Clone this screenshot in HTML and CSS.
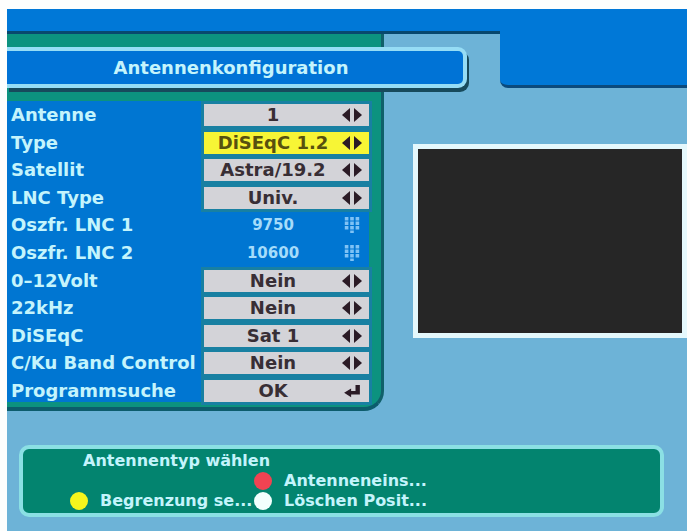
FILE: index.html
```html
<!DOCTYPE html>
<html lang="de">
<head>
    <meta charset="UTF-8">
    <meta name="viewport" content="width=device-width, initial-scale=1.0">
    <title>Antennenkonfiguration</title>
    <link rel="stylesheet" href="styles.css">
</head>
<body>
    <!-- Shared icons -->
    <svg class="sprite" aria-hidden="true">
        <symbol id="arrows" viewBox="0 0 20 14">
            <path d="M8 0v14L0 7z"/>
            <path d="M12 0v14l8-7z"/>
        </symbol>
        <symbol id="keypad" viewBox="0 0 20 20">
            <path d="M2 1h4v4H2zM8 1h4v4H8zM14 1h4v4h-4zM2 6h4v4H2zM8 6h4v4H8zM14 6h4v4h-4zM2 11h4v4H2zM8 11h4v4H8zM14 11h4v4h-4zM8 16h4v3H8z"/>
        </symbol>
        <symbol id="enter" viewBox="0 0 20 16">
            <path d="M14 1h5v11H9v3L1 10l8-5v3h5z"/>
        </symbol>
    </svg>

    <main class="screen">
        <div class="topbar"></div>
        <div class="corner"></div>
        <h1 class="title">Antennenkonfiguration</h1>

        <section class="panel">
            <form class="settings">
                <div class="row">
                    <label for="antenne">Antenne</label>
                    <div class="field">
                        <select id="antenne"><option>1</option></select>
                        <svg class="icon"><use href="#arrows"/></svg>
                    </div>
                </div>
                <div class="row">
                    <label for="type">Type</label>
                    <div class="field selected">
                        <select id="type"><option>DiSEqC 1.2</option></select>
                        <svg class="icon"><use href="#arrows"/></svg>
                    </div>
                </div>
                <div class="row">
                    <label for="satellit">Satellit</label>
                    <div class="field">
                        <select id="satellit"><option>Astra/19.2</option></select>
                        <svg class="icon"><use href="#arrows"/></svg>
                    </div>
                </div>
                <div class="row">
                    <label for="lnc-type">LNC Type</label>
                    <div class="field">
                        <select id="lnc-type"><option>Univ.</option></select>
                        <svg class="icon"><use href="#arrows"/></svg>
                    </div>
                </div>
                <div class="row">
                    <label for="lnc1">Oszfr. LNC 1</label>
                    <div class="field number">
                        <input id="lnc1" type="text" value="9750">
                        <svg class="icon"><use href="#keypad"/></svg>
                    </div>
                </div>
                <div class="row">
                    <label for="lnc2">Oszfr. LNC 2</label>
                    <div class="field number">
                        <input id="lnc2" type="text" value="10600">
                        <svg class="icon"><use href="#keypad"/></svg>
                    </div>
                </div>
                <div class="row">
                    <label for="volt">0–12Volt</label>
                    <div class="field">
                        <select id="volt"><option>Nein</option></select>
                        <svg class="icon"><use href="#arrows"/></svg>
                    </div>
                </div>
                <div class="row">
                    <label for="khz">22kHz</label>
                    <div class="field">
                        <select id="khz"><option>Nein</option></select>
                        <svg class="icon"><use href="#arrows"/></svg>
                    </div>
                </div>
                <div class="row">
                    <label for="diseqc">DiSEqC</label>
                    <div class="field">
                        <select id="diseqc"><option>Sat 1</option></select>
                        <svg class="icon"><use href="#arrows"/></svg>
                    </div>
                </div>
                <div class="row">
                    <label for="band">C/Ku Band Control</label>
                    <div class="field">
                        <select id="band"><option>Nein</option></select>
                        <svg class="icon"><use href="#arrows"/></svg>
                    </div>
                </div>
                <div class="row">
                    <label for="suche">Programmsuche</label>
                    <button class="field" id="suche" type="button">
                        <span>OK</span>
                        <svg class="icon"><use href="#enter"/></svg>
                    </button>
                </div>
            </form>
        </section>

        <div class="preview"></div>

        <footer class="help">
            <p>Antennentyp wählen</p>
            <button class="key red" type="button">Antenneneins...</button>
            <button class="key yellow" type="button">Begrenzung se...</button>
            <button class="key white" type="button">Löschen Posit...</button>
        </footer>
    </main>
</body>
</html>
```
FILE: styles.css
```css
* {
    box-sizing: border-box;
}
body {
    margin: 0;
    padding: 9px 3px 0 7px;
    background: #fdfefd;
    font-family: "DejaVu Sans", Verdana, sans-serif;
    font-weight: bold;
    font-size: 18px;
    color: #c4f4fc;
}
.sprite {
    display: none;
}
.screen {
    display: grid;
    grid-template-columns: 377fr 83fr 33fr 187fr;
    grid-template-rows: 25px 13px 41px auto 1fr;
    min-height: calc(100vh - 9px);
    background: #6db3d7;
}
.topbar {
    grid-area: 1 / 1 / 2 / 5;
    background: #0078d7;
    border-bottom: 3px solid #08486e;
}
/* tab hanging down from the top bar */
.corner {
    grid-area: 1 / 4 / 4 / 5;
    background: #0078d7;
    border-bottom: 3px solid #0b4a7c;
    border-bottom-left-radius: 8px;
}
.title {
    grid-area: 3 / 1 / 4 / 3;
    z-index: 1;
    margin: 0;
    padding-right: 8px;
    border: 4px solid #96ddf5;
    border-left: 0;
    border-radius: 0 9px 9px 0;
    background: #0073d6;
    box-shadow: 2px 4px 0 #174a5c;
    font-size: 18px;
    line-height: 33px;
    text-align: center;
}

/* Settings panel */
.panel {
    grid-area: 2 / 1 / 5 / 2;
    padding: 67px 12px 5px 0;
    background: #0c927f;
    border-right: 3px solid #10606a;
    border-bottom: 4px solid #0c5c6c;
    border-bottom-right-radius: 20px;
}
.settings {
    display: flex;
    flex-direction: column;
    justify-content: space-between;
    min-height: 301px;
    padding-top: 3px;
    background: #0076d2;
}
.row {
    display: grid;
    grid-template-columns: 197fr 165fr;
    line-height: 22px;
}
.row label {
    padding-left: 4px;
    white-space: nowrap;
}
.field {
    display: flex;
    align-items: center;
    min-width: 0;
    height: 22px;
    padding: 0 7px 0 0;
    border: 0;
    background: #d3d3d8;
    box-shadow: 0 0 0 3px #1880a2;
    color: #382e35;
    font: inherit;
}
.field select,
.field input,
.field span {
    flex: 1;
    width: 0;
    height: 22px;
    padding: 0;
    border: 0;
    background: none;
    appearance: none;
    color: inherit;
    font: inherit;
    line-height: 22px;
    text-align: center;
}
.field.selected {
    background: #f7f535;
    color: #57510f;
}
.field.number {
    background: none;
    box-shadow: none;
    color: #a5dcfa;
    font-size: 15px;
}
.icon {
    width: 20px;
    height: 14px;
    fill: #2b1b26;
}
.number .icon {
    height: 18px;
    fill: #7fc2f5;
}

.preview {
    grid-area: 4 / 2 / 5 / 5;
    height: 194px;
    margin: 56px 0 0 29px;
    background: #262626;
    border: 5px solid #e4f8fc;
}

/* Help box with the colour keys */
.help {
    grid-area: 5 / 1 / 6 / 5;
    align-self: start;
    display: grid;
    grid-template-columns: 184px 1fr;
    grid-auto-rows: 20px;
    margin: 34px 23px 15px 12px;
    padding: 2px 0 2px 47px;
    background: #03846f;
    border: 4px solid #8be0e4;
    border-radius: 10px;
    font-size: 16px;
    line-height: 20px;
    white-space: nowrap;
}
.help p {
    grid-column: 1 / 3;
    margin: 0;
    padding-left: 13px;
}
.key {
    display: flex;
    align-items: center;
    gap: 12px;
    padding: 0;
    border: 0;
    background: none;
    color: inherit;
    font: inherit;
}
.key::before {
    content: "";
    width: 18px;
    height: 18px;
    border-radius: 50%;
}
.red {
    grid-column: 2;
}
.red::before {
    background: #f04352;
}
.yellow::before {
    background: #f5f51c;
}
.white::before {
    background: #f2fffd;
}
```
